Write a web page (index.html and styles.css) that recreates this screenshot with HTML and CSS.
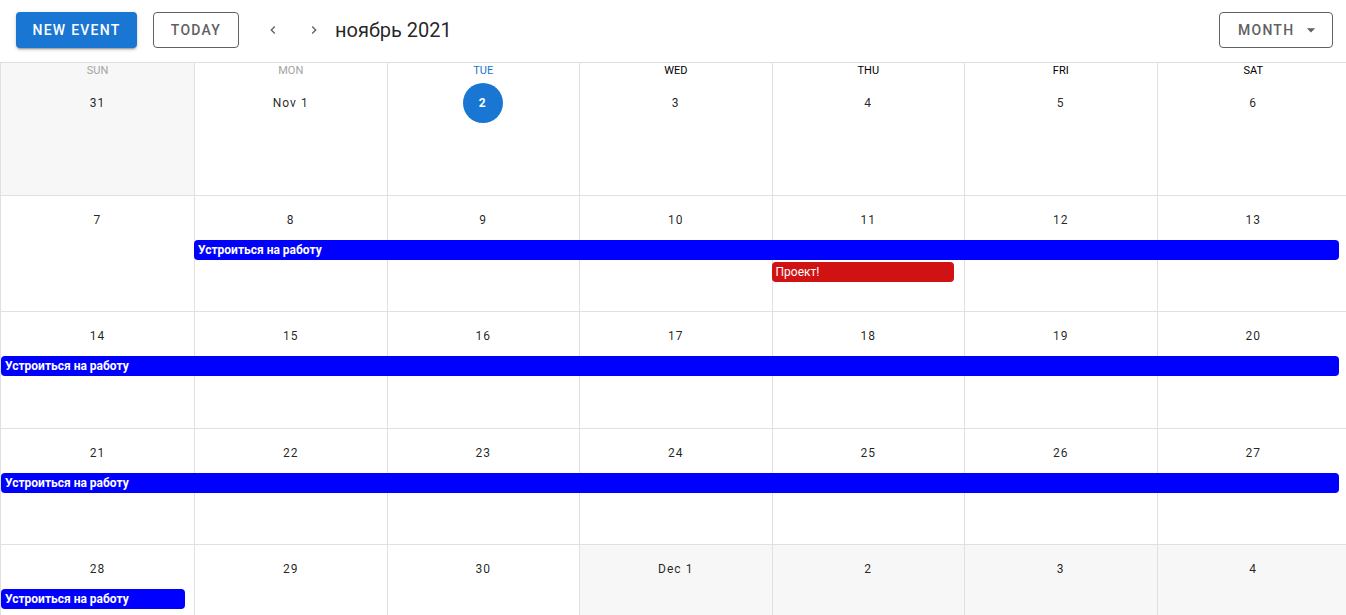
FILE: index.html
```html
<!DOCTYPE html>
<html lang="ru">
<head>
<meta charset="utf-8">
<title>Calendar</title>
<link rel="stylesheet" href="styles.css">
</head>
<body>
<div class="app">
  <div class="toolbar">
    <button class="btn btn-primary">New Event</button>
    <button class="btn btn-outlined today">Today</button>
    <button class="icon-btn" aria-label="prev">
      <svg viewBox="0 0 24 24" width="16" height="16"><path d="M15.41,16.58L10.83,12L15.41,7.41L14,6L8,12L14,18L15.41,16.58Z"/></svg>
    </button>
    <button class="icon-btn next" aria-label="next">
      <svg viewBox="0 0 24 24" width="16" height="16"><path d="M8.59,16.58L13.17,12L8.59,7.41L10,6L16,12L10,18L8.59,16.58Z"/></svg>
    </button>
    <div class="title">ноябрь 2021</div>
    <div class="spacer"></div>
    <button class="btn btn-outlined month">Month
      <svg viewBox="0 0 24 24" width="20" height="20"><path d="M7,10L12,15L17,10H7Z"/></svg>
    </button>
  </div>

  <div class="cal">
    <div class="head">
      <div class="wd past outside">Sun</div>
      <div class="wd past">Mon</div>
      <div class="wd present">Tue</div>
      <div class="wd">Wed</div>
      <div class="wd">Thu</div>
      <div class="wd">Fri</div>
      <div class="wd">Sat</div>
    </div>

    <div class="week">
      <div class="day outside"><span class="label">31</span></div>
      <div class="day"><span class="label">Nov 1</span></div>
      <div class="day"><span class="label today-label">2</span></div>
      <div class="day"><span class="label">3</span></div>
      <div class="day"><span class="label">4</span></div>
      <div class="day"><span class="label">5</span></div>
      <div class="day"><span class="label">6</span></div>
    </div>

    <div class="week">
      <div class="day"><span class="label">7</span></div>
      <div class="day"><span class="label">8</span></div>
      <div class="day"><span class="label">9</span></div>
      <div class="day"><span class="label">10</span></div>
      <div class="day"><span class="label">11</span></div>
      <div class="day"><span class="label">12</span></div>
      <div class="day"><span class="label">13</span></div>
      <div class="event blue multi ev-r1 c2-s6 shift">Устроиться на работу</div>
      <div class="event red single ev-r2 c5 shift">Проект!</div>
    </div>

    <div class="week">
      <div class="day"><span class="label">14</span></div>
      <div class="day"><span class="label">15</span></div>
      <div class="day"><span class="label">16</span></div>
      <div class="day"><span class="label">17</span></div>
      <div class="day"><span class="label">18</span></div>
      <div class="day"><span class="label">19</span></div>
      <div class="day"><span class="label">20</span></div>
      <div class="event blue multi ev-r1 c1-s7">Устроиться на работу</div>
    </div>

    <div class="week">
      <div class="day"><span class="label">21</span></div>
      <div class="day"><span class="label">22</span></div>
      <div class="day"><span class="label">23</span></div>
      <div class="day"><span class="label">24</span></div>
      <div class="day"><span class="label">25</span></div>
      <div class="day"><span class="label">26</span></div>
      <div class="day"><span class="label">27</span></div>
      <div class="event blue multi ev-r1 c1-s7">Устроиться на работу</div>
    </div>

    <div class="week">
      <div class="day"><span class="label">28</span></div>
      <div class="day"><span class="label">29</span></div>
      <div class="day"><span class="label">30</span></div>
      <div class="day outside"><span class="label">Dec 1</span></div>
      <div class="day outside"><span class="label">2</span></div>
      <div class="day outside"><span class="label">3</span></div>
      <div class="day outside"><span class="label">4</span></div>
      <div class="event blue single ev-r1 c1">Устроиться на работу</div>
    </div>
  </div>
</div>
</body>
</html>
```

FILE: styles.css
```css
* { box-sizing: border-box; }
html, body {
  margin: 0;
  padding: 0;
  overflow: hidden;
  background: #fff;
}
body {
  font-family: Roboto, "Noto Sans", Arial, sans-serif;
  color: rgba(0, 0, 0, 0.87);
}
.app { width: 100%; }

.toolbar {
  height: 62px;
  display: flex;
  align-items: flex-start;
  padding: 12px 13px 0 16px;
}
.btn {
  height: 36px;
  font-family: Roboto, Arial, sans-serif;
  font-size: 14px;
  font-weight: 500;
  letter-spacing: 0.0892857143em;
  text-transform: uppercase;
  border-radius: 4px;
  padding: 0 16px;
  display: inline-flex;
  align-items: center;
  cursor: pointer;
  background: transparent;
}
.btn-primary {
  width: 121px;
  justify-content: center;
  background: #1976d2;
  color: #fff;
  border: none;
  box-shadow: 0 3px 1px -2px rgba(0,0,0,.2), 0 2px 2px 0 rgba(0,0,0,.14), 0 1px 5px 0 rgba(0,0,0,.12);
  margin-right: 16px;
}
.btn-outlined {
  border: 1px solid #616161;
  color: #616161;
}
.today { width: 86px; justify-content: center; margin-right: 14px; }
.icon-btn {
  width: 40px;
  height: 36px;
  border: none;
  background: transparent;
  display: inline-flex;
  align-items: center;
  justify-content: center;
  padding: 0;
  cursor: pointer;
}
.icon-btn.next { margin-left: 1px; }
.icon-btn svg { fill: #616161; }
.title {
  font-size: 20px;
  line-height: 36px;
  margin-left: 1px;
  color: rgba(0, 0, 0, 0.87);
}
.spacer { flex: 1; }
.month {
  width: 114px;
  padding: 0 11px 0 18px;
  justify-content: space-between;
}
.month svg { fill: #616161; }

.cal {
  width: 1350px;
  border-top: 1px solid #e0e0e0;
  border-left: 1px solid #e0e0e0;
}
.head,
.week {
  display: grid;
  grid-template-columns: 194px repeat(6, 1fr);
}
.head { height: 16px; }
.wd {
  border-right: 1px solid #e0e0e0;
  text-align: center;
  font-size: 11px;
  line-height: 15px;
  text-transform: uppercase;
  color: #000;
}
.wd.past { color: #a3a3a3; }
.wd.present { color: #1976d2; }
.outside { background: #f7f7f7; }

.week {
  grid-template-rows: 44px 21px 21px 1fr;
  height: 116.5px;
}
.day {
  grid-row: 1 / -1;
  border-right: 1px solid #e0e0e0;
  border-bottom: 1px solid #e0e0e0;
  display: flex;
  justify-content: center;
  align-items: flex-start;
  padding-top: 4px;
}
.week .day:nth-child(1) { grid-column: 1; }
.week .day:nth-child(2) { grid-column: 2; }
.week .day:nth-child(3) { grid-column: 3; }
.week .day:nth-child(4) { grid-column: 4; }
.week .day:nth-child(5) { grid-column: 5; }
.week .day:nth-child(6) { grid-column: 6; }
.week .day:nth-child(7) { grid-column: 7; }
.label {
  height: 40px;
  min-width: 40px;
  padding: 0 6px;
  border-radius: 20px;
  display: inline-flex;
  align-items: center;
  justify-content: center;
  font-size: 12px;
  font-weight: 400;
  letter-spacing: 0.09em;
  color: rgba(0, 0, 0, 0.87);
}
.today-label {
  background: #1976d2;
  color: #fff;
  font-weight: 700;
  padding: 0;
  width: 40px;
  margin-left: -1px;
}

.event {
  position: relative;
  z-index: 1;
  height: 20px;
  line-height: 20px;
  border-radius: 4px;
  color: #fff;
  font-size: 12px;
  padding-left: 4px;
  white-space: nowrap;
  overflow: hidden;
}
.shift { margin-left: -1px; }
.blue { background: #0000ff; font-weight: 700; }
.red { background: #d01212; font-weight: 400; }
.multi { margin-right: 11px; }
.single { width: 95%; }
.ev-r1 { grid-row: 2; }
.ev-r2 { grid-row: 3; margin-top: 1px; }
.c1 { grid-column: 1; }
.c5 { grid-column: 5; }
.c2-s6 { grid-column: 2 / span 6; }
.c1-s7 { grid-column: 1 / span 7; }
```
